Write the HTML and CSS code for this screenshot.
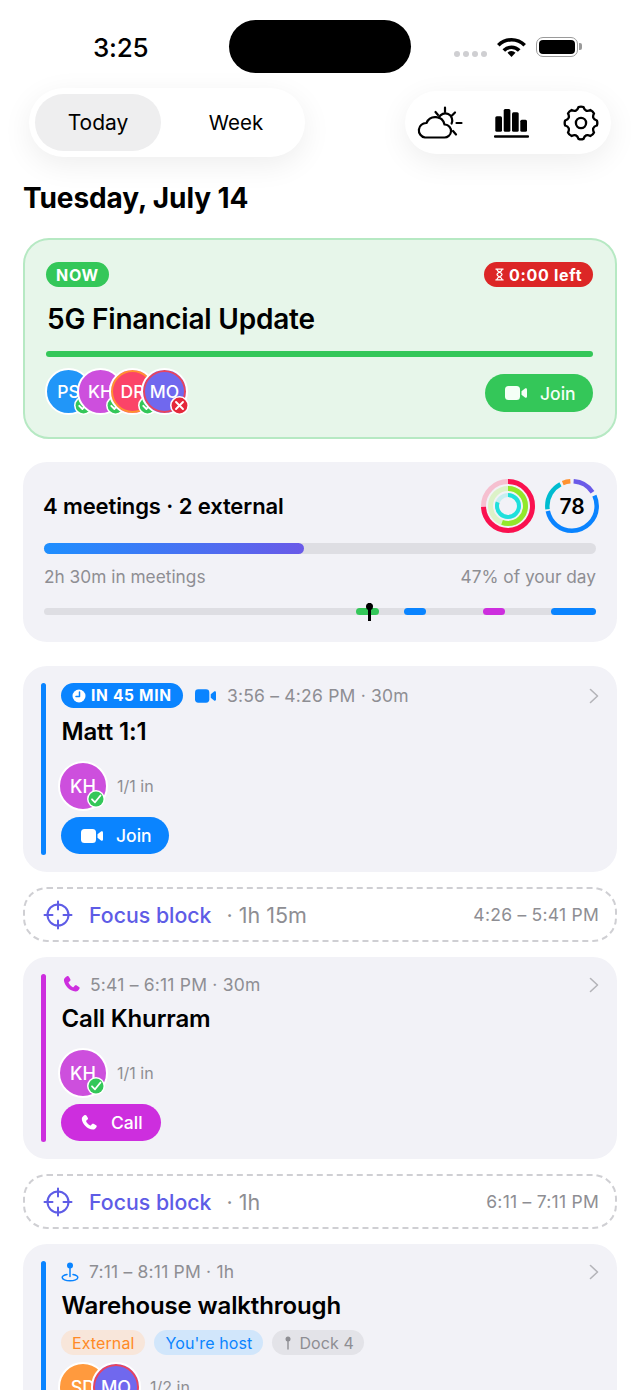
FILE: index.html
```html
<!DOCTYPE html>
<html lang="en">

<head>
    <meta charset="UTF-8">
    <meta name="viewport" content="width=device-width, initial-scale=1.0">
    <title>Today</title>
    <link rel="stylesheet" href="styles.css">
</head>

<body>
    <svg class="sprite" aria-hidden="true">
        <symbol id="video" viewBox="0 0 22 16">
            <rect x="0" y="1" width="15" height="14" rx="3.5" fill="currentColor" />
            <path d="M16.5 6.2 20 3.4c.8-.6 2-.1 2 1v7.200c0 1.100-1.200 1.600-2 1l-3.500-2.800z" fill="currentColor" />
        </symbol>
        <symbol id="phone" viewBox="0 0 18 18">
            <path d="M4.700 1.100c.6-.4 1.300-.2 1.700.4l1.500 2.500c.3.600.2 1.200-.3 1.600l-1.200 1c-.3.200-.3.500-.2.800.8 1.700 2.200 3.200 4 4.100.3.100.6.100.8-.2l1-1.200c.4-.5 1-.6 1.600-.3l2.500 1.500c.6.400.8 1.100.4 1.700-.8 1.400-2 2.700-3.700 2.600C7.300 15.300 2.300 10 1.800 5c-.1-1.700 1.500-3 2.900-3.900z" fill="currentColor" />
        </symbol>
        <symbol id="ok" viewBox="0 0 18 18">
            <circle cx="9" cy="9" r="9" fill="#fff" />
            <circle cx="9" cy="9" r="7.500" fill="#34c759" />
            <path d="m5 9.300 3 3 5.500-6.800" fill="none" stroke="#fff" stroke-width="1.800" stroke-linecap="round" stroke-linejoin="round" />
        </symbol>
        <symbol id="no" viewBox="0 0 18 18">
            <circle cx="9" cy="9" r="9" fill="#fff" />
            <circle cx="9" cy="9" r="7.500" fill="#e5283a" />
            <path d="m5.700 5.700 6.600 6.600m0-6.600-6.600 6.600" fill="none" stroke="#fff" stroke-width="1.800" stroke-linecap="round" />
        </symbol>
        <symbol id="target" viewBox="0 0 30 30">
            <g fill="none" stroke="currentColor" stroke-width="2" stroke-linecap="round">
                <circle cx="15" cy="15" r="10.500" />
                <path d="M15 1.500v8M15 20.500v8M1.500 15h8M20.500 15h8" />
            </g>
        </symbol>
        <symbol id="chevron" viewBox="0 0 10 16">
            <path d="m1.500 1.500 7 6.500-7 6.500" fill="none" stroke="currentColor" stroke-width="1.600" stroke-linecap="round" stroke-linejoin="round" />
        </symbol>
    </svg>

    <div class="phone">
        <div class="status">
            <span class="clock">3:25</span>
            <span class="island"></span>
            <span class="signal"><i></i><i></i><i></i><i></i></span>
            <svg class="wifi" viewBox="0 0 28 20" fill="none" stroke="#000" stroke-width="3.600">
                <path d="M.8 8.300a18.500 18.500 0 0 1 26.400 0" />
                <path d="M6.300 13.500a10.700 10.700 0 0 1 15.400 0" />
                <path d="M14 20l-4-4.300a5.800 5.800 0 0 1 8 0z" fill="#000" stroke="none" />
            </svg>
            <span class="battery"><i></i></span>
        </div>

        <div class="toolbar">
            <div class="segment">
                <span class="seg-item seg-active">Today</span>
                <span class="seg-item">Week</span>
            </div>
            <div class="tools">
                <svg class="tool-weather" viewBox="0 0 47 33" fill="none" stroke="#000" stroke-width="2.200" stroke-linecap="round" stroke-linejoin="round">
                    <path d="M9 31.500h19a6.500 6.500 0 0 0 1-13h-.5A9.500 9.500 0 0 0 10.500 17 7.300 7.300 0 0 0 9 31.500z" />
                    <path d="M22.800 11.500a7 7 0 0 1 12.800 6" />
                    <path d="M29 1.500V6M39 6.500l-3 3M40.500 17h5M37 25l3 3.500M19.500 6 22 9" />
                </svg>
                <svg class="tool-bars" viewBox="0 0 35 30">
                    <rect x="1.300" y="7.300" width="6.700" height="15.500" rx="1.500" />
                    <rect x="9.700" y="0" width="6.700" height="22.800" rx="1.500" />
                    <rect x="18" y="3.300" width="6.700" height="19.500" rx="1.500" />
                    <rect x="26.300" y="10.700" width="6.700" height="12.100" rx="1.500" />
                    <rect x="0" y="26.300" width="35" height="2.400" rx="1" />
                </svg>
                <svg class="tool-gear" viewBox="0 0 24 24" fill="none" stroke="#000" stroke-width="1.550" stroke-linejoin="round">
                    <circle cx="12" cy="12" r="3.400" />
                    <path d="M10.330 1.430Q12 .8 13.670 1.430Q14.830 5.160 18.290 3.340Q19.920 4.080 20.660 5.710Q18.840 9.170 22.570 10.330Q23.200 12 22.570 13.670Q18.840 14.830 20.660 18.290Q19.920 19.920 18.290 20.660Q14.830 18.840 13.670 22.570Q12 23.200 10.330 22.570Q9.170 18.840 5.710 20.660Q4.080 19.920 3.340 18.290Q5.160 14.830 1.430 13.670Q.8 12 1.430 10.330Q5.160 9.170 3.340 5.710Q4.080 4.080 5.710 3.340Q9.170 5.160 10.330 1.430z" />
                </svg>
            </div>
        </div>

        <h1 class="date">Tuesday, July 14</h1>

        <section class="now-card">
            <div class="now-top">
                <span class="pill pill-now">NOW</span>
                <span class="pill pill-left">
                    <svg class="hourglass" viewBox="0 0 10 14" fill="none" stroke="#fff" stroke-width="1.400" stroke-linecap="round">
                        <path d="M1 1h8M1 13h8M2.200 1.500c0 3 5.600 3 5.600 5.500s-5.600 2.500-5.600 5.500M7.800 1.500c0 3-5.600 3-5.600 5.500s5.600 2.500 5.600 5.500" />
                    </svg>
                    0:00 left
                </span>
            </div>
            <h2 class="now-title">5G Financial Update</h2>
            <div class="now-progress"></div>
            <div class="now-bottom">
                <div class="avatars">
                    <span class="avatar av-blue">PS<svg class="av-badge"><use href="#ok" /></svg></span>
                    <span class="avatar av-magenta">KH<svg class="av-badge"><use href="#ok" /></svg></span>
                    <span class="avatar av-pink">DR<svg class="av-badge"><use href="#ok" /></svg></span>
                    <span class="avatar av-indigo">MO<svg class="av-badge"><use href="#no" /></svg></span>
                </div>
                <span class="btn btn-green btn-now"><svg class="btn-video"><use href="#video" /></svg>Join</span>
            </div>
        </section>

        <section class="stats-card">
            <div class="stats-top">
                <span class="stats-title">4 meetings · 2 external</span>
                <div class="rings">
                    <svg class="ring" viewBox="0 0 54 54" fill="none">
                        <g transform="rotate(-90 27 27)">
                            <circle cx="27" cy="27" r="24.500" stroke="#f6c0d0" stroke-width="5" />
                            <circle cx="27" cy="27" r="24.500" stroke="#fa114f" stroke-width="5" pathLength="360" stroke-dasharray="268 360" />
                            <circle cx="27" cy="27" r="17.500" stroke="#dcf2c8" stroke-width="5" />
                            <circle cx="27" cy="27" r="17.500" stroke="#92e82a" stroke-width="5" pathLength="360" stroke-dasharray="200 360" />
                            <circle cx="27" cy="27" r="11" stroke="#c6eef0" stroke-width="4" />
                            <circle cx="27" cy="27" r="11" stroke="#1fe0dc" stroke-width="4" pathLength="360" stroke-dasharray="290 360" />
                        </g>
                    </svg>
                    <div class="score">
                        <svg class="ring" viewBox="0 0 54 54" fill="none" stroke-width="4.500">
                            <g transform="rotate(-90 27 27)">
                                <circle cx="27" cy="27" r="24.700" stroke="#0a84ff" pathLength="360" stroke-dasharray="193 360" stroke-dashoffset="-65" />
                                <circle cx="27" cy="27" r="24.700" stroke="#00bcd0" pathLength="360" stroke-dasharray="70 360" stroke-dashoffset="-262" />
                                <circle cx="27" cy="27" r="24.700" stroke="#ff9230" pathLength="360" stroke-dasharray="18 360" stroke-dashoffset="-338" />
                                <circle cx="27" cy="27" r="24.700" stroke="#6a5ae8" pathLength="360" stroke-dasharray="52 360" stroke-dashoffset="-4" />
                            </g>
                        </svg>
                        <span class="score-num">78</span>
                    </div>
                </div>
            </div>
            <div class="meter"><div class="meter-fill" style="width: 47.100%"></div></div>
            <div class="meter-labels">
                <span>2h 30m in meetings</span>
                <span>47% of your day</span>
            </div>
            <div class="timeline">
                <i class="slot slot-green" style="left: 56.500%; width: 4.200%"></i>
                <i class="slot slot-blue" style="left: 65.200%; width: 4%"></i>
                <i class="slot slot-magenta" style="left: 79.500%; width: 4%"></i>
                <i class="slot slot-blue" style="left: 91.800%; width: 8.200%"></i>
                <i class="pin" style="left: 59%"></i>
            </div>
        </section>

        <section class="event">
            <div class="event-bar bar-blue"></div>
            <div class="event-body">
                <div class="event-meta">
                    <span class="pill pill-soon">
                        <svg class="clock-ico" viewBox="0 0 14 14">
                            <circle cx="7" cy="7" r="6.500" fill="#fff" />
                            <path d="M7.500 3v4.500H4" fill="none" stroke="#0a84ff" stroke-width="1.500" stroke-linecap="round" stroke-linejoin="round" />
                        </svg>
                        IN 45 MIN
                    </span>
                    <svg class="meta-video"><use href="#video" /></svg>
                    <span class="meta-time">3:56 – 4:26 PM · 30m</span>
                    <svg class="chevron"><use href="#chevron" /></svg>
                </div>
                <h3 class="event-title">Matt 1:1</h3>
                <div class="people">
                    <span class="avatar av-magenta">KH<svg class="av-badge"><use href="#ok" /></svg></span>
                    <span class="people-count">1/1 in</span>
                </div>
                <span class="btn btn-blue"><svg class="btn-video"><use href="#video" /></svg>Join</span>
            </div>
        </section>

        <section class="focus">
            <svg class="focus-ico"><use href="#target" /></svg>
            <span class="focus-name">Focus block</span>
            <span class="focus-len">· 1h 15m</span>
            <span class="focus-time">4:26 – 5:41 PM</span>
        </section>

        <section class="event">
            <div class="event-bar bar-magenta"></div>
            <div class="event-body">
                <div class="event-meta meta-plain">
                    <svg class="meta-phone"><use href="#phone" /></svg>
                    <span class="meta-time">5:41 – 6:11 PM · 30m</span>
                    <svg class="chevron"><use href="#chevron" /></svg>
                </div>
                <h3 class="event-title">Call Khurram</h3>
                <div class="people">
                    <span class="avatar av-magenta">KH<svg class="av-badge"><use href="#ok" /></svg></span>
                    <span class="people-count">1/1 in</span>
                </div>
                <span class="btn btn-magenta"><svg class="btn-phone"><use href="#phone" /></svg>Call</span>
            </div>
        </section>

        <section class="focus">
            <svg class="focus-ico"><use href="#target" /></svg>
            <span class="focus-name">Focus block</span>
            <span class="focus-len">· 1h</span>
            <span class="focus-time">6:11 – 7:11 PM</span>
        </section>

        <section class="event">
            <div class="event-bar bar-blue"></div>
            <div class="event-body">
                <div class="event-meta meta-plain">
                    <svg class="meta-place" viewBox="0 0 18 20" fill="none" stroke="#0a84ff" stroke-width="1.500" stroke-linecap="round">
                        <circle cx="9" cy="3.500" r="3" fill="#0a84ff" stroke="none" />
                        <path d="M9 6v8.500" />
                        <path d="M6 12.500C3 13 1.200 14 1.200 15.500c0 1.900 3.500 3.300 7.800 3.300s7.800-1.400 7.800-3.300c0-1.500-1.800-2.500-4.800-3" />
                    </svg>
                    <span class="meta-time">7:11 – 8:11 PM · 1h</span>
                    <svg class="chevron"><use href="#chevron" /></svg>
                </div>
                <h3 class="event-title">Warehouse walkthrough</h3>
                <div class="chips">
                    <span class="chip chip-orange">External</span>
                    <span class="chip chip-blue">You're host</span>
                    <span class="chip chip-gray">
                        <svg class="pin-ico" viewBox="0 0 6 14">
                            <circle cx="3" cy="3" r="2.500" fill="#8e8e93" />
                            <path d="M3 5v8" stroke="#8e8e93" stroke-width="1.400" stroke-linecap="round" />
                        </svg>
                        Dock 4
                    </span>
                </div>
                <div class="people people-last">
                    <div class="avatars">
                        <span class="avatar av-orange">SD</span>
                        <span class="avatar av-indigo">MO</span>
                    </div>
                    <span class="people-count">1/2 in</span>
                </div>
            </div>
        </section>
    </div>
</body>

</html>
```

FILE: styles.css
```css
* {
    box-sizing: border-box;
}

html,
body {
    margin: 0;
    height: 1390px;
    overflow: hidden;
    background: #fff;
}

body {
    font-family: Inter, "Liberation Sans", sans-serif;
    color: #000;
}

h1,
h2,
h3 {
    margin: 0;
}

.sprite {
    position: absolute;
    width: 0;
    height: 0;
}

/* status bar */
.status {
    display: flex;
    align-items: center;
    height: 88px;
    padding: 18px 0 13px 93px;
}

.clock {
    width: 136px;
    margin-top: 2px;
    font-size: 26px;
    font-weight: 500;
    letter-spacing: -0.2px;
}

.island {
    width: 182px;
    height: 53px;
    border-radius: 27px;
    background: #000;
}

.signal {
    display: flex;
    gap: 3px;
    margin: 15px 10px 0 43px;
}

.signal i {
    width: 6px;
    height: 6px;
    border-radius: 50%;
    background: #cfcfd2;
}

.wifi {
    width: 29px;
    height: 20px;
    margin-right: 10px;
}

.battery {
    position: relative;
    width: 42px;
    height: 20px;
    padding: 2px;
    border: 1.500px solid #9a9a9a;
    border-radius: 7px;
}

.battery i {
    display: block;
    height: 100%;
    border-radius: 4px;
    background: #000;
}

.battery::after {
    content: "";
    position: absolute;
    right: -5px;
    top: 5px;
    width: 3px;
    height: 7px;
    border-radius: 0 2px 2px 0;
    background: #9a9a9a;
}

/* toolbar */
.toolbar {
    display: flex;
    align-items: center;
    justify-content: space-between;
    padding: 0 29px;
}

.segment {
    display: flex;
    width: 276px;
    height: 69px;
    padding: 6px;
    border-radius: 35px;
    background: #fff;
    box-shadow: 0 8px 30px rgba(0, 0, 0, 0.07);
}

.seg-item {
    display: flex;
    align-items: center;
    justify-content: center;
    width: 126px;
    border-radius: 29px;
    font-size: 21px;
}

.seg-item + .seg-item {
    width: 138px;
    padding-left: 12px;
    font-size: 20.500px;
}

.seg-active {
    background: #eeeeef;
}

.tools {
    display: flex;
    align-items: center;
    width: 206px;
    height: 63px;
    padding-left: 11px;
    border-radius: 32px;
    background: #fff;
    box-shadow: 0 8px 30px rgba(0, 0, 0, 0.07);
}

.tool-weather {
    width: 47px;
    height: 33px;
}

.tool-bars {
    width: 35px;
    height: 30px;
    margin-left: 31px;
    margin-top: 2px;
}

.tool-gear {
    width: 36px;
    height: 36px;
    margin-left: 34px;
}

.date {
    margin: 24px 0 23px 23px;
    font-size: 28px;
    line-height: 34px;
    font-weight: 700;
    letter-spacing: -0.1px;
}

/* current meeting */
.now-card {
    margin: 0 23px 23px;
    height: 201px;
    padding: 22px 22px 0 21px;
    border: 2px solid #b6e9c3;
    border-radius: 26px;
    background: #e7f6ea;
}

.now-top,
.now-bottom {
    display: flex;
    align-items: center;
    justify-content: space-between;
}

.pill {
    display: inline-flex;
    align-items: center;
    height: 25px;
    border-radius: 13px;
    color: #fff;
    font-size: 16px;
    font-weight: 700;
    letter-spacing: 0.7px;
}

.pill-now {
    width: 63px;
    justify-content: center;
    background: #34c759;
}

.pill-left {
    width: 109px;
    gap: 5px;
    padding-left: 11px;
    background: #dc2626;
}

.hourglass {
    width: 9px;
    height: 13px;
}

.now-title {
    margin: 15px 0 14px 1px;
    font-size: 28px;
    line-height: 35px;
    font-weight: 600;
    letter-spacing: -0.2px;
}

.now-progress {
    height: 6px;
    border-radius: 3px;
    background: #34c759;
}

.now-bottom {
    margin-top: 11px;
}

/* avatars */
.avatars {
    display: flex;
}

.now-bottom .avatars {
    margin-left: -1px;
}

.avatar {
    position: relative;
    display: flex;
    align-items: center;
    justify-content: center;
    flex: none;
    width: 47px;
    height: 47px;
    border: 2.500px solid #fff;
    border-radius: 50%;
    color: #fff;
    font-size: 17.500px;
    font-weight: 500;
}

.avatars .avatar + .avatar {
    margin-left: -15px;
}

.av-badge {
    position: absolute;
    right: -2.500px;
    bottom: -2px;
    width: 19px;
    height: 19px;
}

.people .avatar {
    width: 50px;
    height: 50px;
    font-size: 18px;
}

.people .av-badge {
    right: 1px;
    bottom: 1px;
    width: 18px;
    height: 18px;
}

.people .avatars .avatar + .avatar {
    margin-left: -17px;
}

.av-blue {
    background: #2196f8;
}

.av-magenta {
    background: #cd4fdd;
}

.av-pink {
    background: #fb4468;
    box-shadow: inset 0 0 0 2px #ff9230;
}

.av-indigo {
    background: #7068ee;
    box-shadow: inset 0 0 0 2px #e8445f;
}

.av-orange {
    background: #ff9a3e;
}

/* buttons */
.btn {
    display: inline-flex;
    align-items: center;
    height: 37px;
    border-radius: 19px;
    color: #fff;
    font-size: 17.500px;
    font-weight: 500;
}

.btn-now {
    width: 108px;
    height: 38px;
    margin-top: 3px;
    padding-left: 20px;
    gap: 13px;
}

.btn-green {
    background: #34c759;
    color: #f4fff6;
}

.btn-blue {
    width: 108px;
    padding-left: 20px;
    gap: 13px;
    background: #0a84ff;
}

.btn-magenta {
    width: 100px;
    padding-left: 19px;
    gap: 13px;
    background: #cd2ede;
}

.btn-video {
    width: 22px;
    height: 16px;
}

.btn-phone {
    width: 18px;
    height: 18px;
}

/* day summary */
.stats-card {
    position: relative;
    margin: 0 23px 24px;
    height: 180px;
    padding: 17px 21px 0;
    border-radius: 24px;
    background: #f2f2f7;
}

.stats-top {
    display: flex;
    align-items: center;
    justify-content: space-between;
}

.stats-title {
    margin-left: -1px;
    font-size: 22px;
    font-weight: 580;
    letter-spacing: -0.1px;
}

.rings {
    display: flex;
    gap: 10px;
    margin-right: -3px;
}

.ring {
    display: block;
    width: 54px;
    height: 54px;
}

.score {
    position: relative;
}

.score-num {
    position: absolute;
    inset: 0;
    display: flex;
    align-items: center;
    justify-content: center;
    font-size: 21px;
    font-weight: 600;
}

.meter {
    height: 11px;
    margin-top: 10px;
    border-radius: 6px;
    background: #dedee3;
}

.meter-fill {
    height: 100%;
    border-radius: 6px;
    background: linear-gradient(90deg, #1e8fff, #6a5ae8);
}

.meter-labels {
    display: flex;
    justify-content: space-between;
    margin-top: 12px;
    color: #8e8e93;
    font-size: 17.300px;
    line-height: 22px;
}

.timeline {
    position: relative;
    height: 7px;
    margin-top: 20px;
    border-radius: 4px;
    background: #dedee3;
}

.slot {
    position: absolute;
    top: 0;
    height: 100%;
    border-radius: 4px;
}

.slot-green {
    background: #34c759;
}

.slot-blue {
    background: #0a84ff;
}

.slot-magenta {
    background: #cd2ede;
}

.pin {
    position: absolute;
    top: -5px;
    width: 3px;
    height: 18px;
    margin-left: -1.500px;
    background: #000;
}

.pin::before {
    content: "";
    position: absolute;
    left: -2px;
    top: 0;
    width: 7px;
    height: 7px;
    border-radius: 50%;
    background: #000;
}

/* meeting rows */
.event {
    display: flex;
    gap: 15px;
    margin: 0 23px 15px;
    padding: 17px 18px;
    border-radius: 24px;
    background: #f2f2f7;
}

.event-bar {
    flex: none;
    width: 5px;
    border-radius: 3px;
}

.bar-blue {
    background: #0a84ff;
}

.bar-magenta {
    background: #cd2ede;
}

.event-body {
    flex: 1;
    min-width: 0;
    padding-bottom: 1px;
}

.event-meta {
    display: flex;
    align-items: center;
    height: 25px;
}

.meta-plain {
    height: 21px;
}

.meta-time {
    color: #8e8e93;
    font-size: 17.500px;
    letter-spacing: 0.200px;
}

.pill-soon {
    width: 122px;
    gap: 5px;
    padding-left: 11px;
    background: #0a84ff;
    font-size: 15.500px;
}

.clock-ico {
    width: 14px;
    height: 14px;
}

.meta-video {
    width: 21px;
    height: 16px;
    margin: 0 11px 0 12px;
    color: #0a84ff;
}

.meta-phone {
    width: 19px;
    height: 19px;
    margin: 0 9px 0 1px;
    color: #cd2ede;
}

.meta-place {
    width: 18px;
    height: 20px;
    margin: 0 10px 0 0;
}

.chevron {
    width: 10px;
    height: 16px;
    margin-left: auto;
    color: #b4b4b9;
}

.event-title {
    margin: 9px 0 0 .5px;
    font-size: 24px;
    line-height: 30px;
    font-weight: 600;
    letter-spacing: -0.150px;
}

.people {
    display: flex;
    align-items: center;
    gap: 9px;
    margin: 14px 0 6px -3px;
}

.people-count {
    color: #8e8e93;
    font-size: 16px;
}

.people-last {
    margin-top: 7px;
}

.chips {
    display: flex;
    gap: 9px;
    margin-top: 9px;
}

.chip {
    display: inline-flex;
    align-items: center;
    height: 25px;
    padding: 0 11px;
    border-radius: 13px;
    font-size: 16px;
    letter-spacing: 0.100px;
}

.chip-orange {
    background: #f8e6da;
    color: #ff8a26;
}

.chip-blue {
    background: #d1e6fb;
    color: #0a84ff;
}

.chip-gray {
    gap: 8px;
    padding: 0 10px 0 13px;
    background: #e3e3e8;
    color: #8e8e93;
}

.pin-ico {
    width: 6px;
    height: 14px;
}

/* free time rows */
.focus {
    display: flex;
    align-items: center;
    height: 55px;
    margin: 0 23px 15px;
    padding: 0 16px 0 19px;
    border: 2px dashed #cfcfd3;
    border-radius: 24px;
}

.focus-ico {
    width: 30px;
    height: 30px;
    margin-left: -1px;
    margin-right: 16px;
    color: #5e5ce6;
}

.focus-name {
    color: #5e5ce6;
    font-size: 21.300px;
    font-weight: 500;
}

.focus-len {
    margin-left: 15px;
    color: #8e8e93;
    font-size: 21.500px;
}

.focus-time {
    margin-left: auto;
    color: #8e8e93;
    font-size: 17.500px;
    letter-spacing: 0.250px;
}
```
